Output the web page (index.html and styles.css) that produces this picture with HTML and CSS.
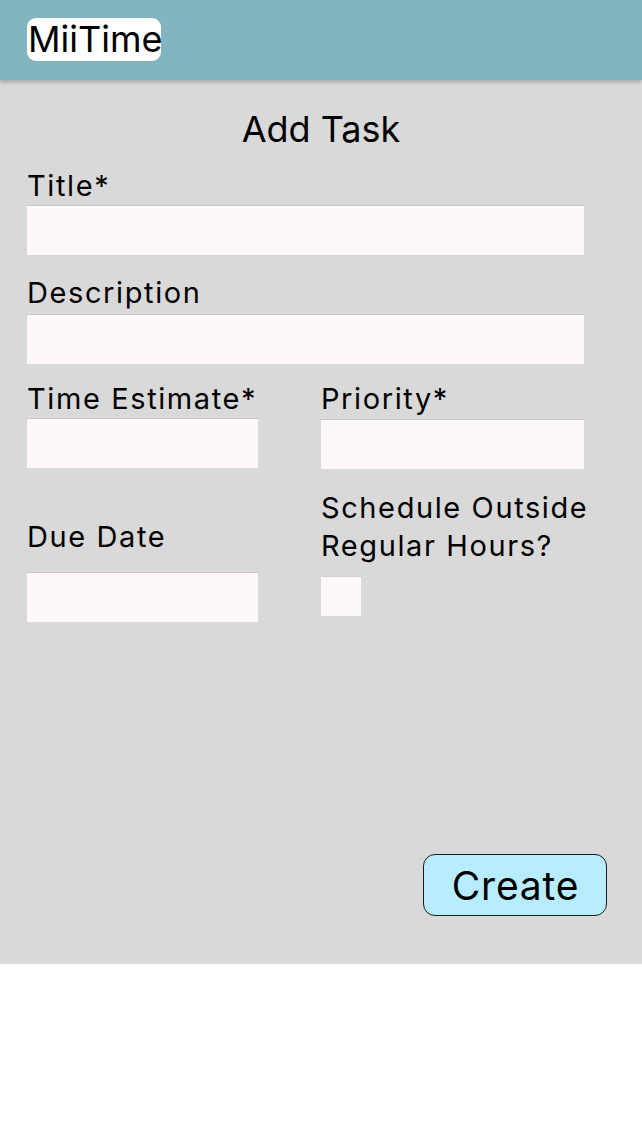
FILE: index.html
```html
<!DOCTYPE html>
<html>
<head>
<meta charset="utf-8">
<link rel="stylesheet" href="styles.css">
</head>
<body>
<header class="topbar">
  <div class="logo">MiiTime</div>
</header>
<main class="content">
  <h1 class="page-title">Add Task</h1>
  <form class="task-form">
    <div class="field title-field">
      <label class="label">Title*</label>
      <input class="input wide" type="text">
    </div>
    <div class="field desc-field">
      <label class="label label-desc">Description</label>
      <input class="input wide" type="text">
    </div>
    <div class="grid-row row-one">
      <div class="field">
        <label class="label">Time Estimate*</label>
        <input class="input small" type="text">
      </div>
      <div class="field priority">
        <label class="label">Priority*</label>
        <input class="input medium" type="text">
      </div>
    </div>
    <div class="grid-row row-two">
      <div class="field due">
        <label class="label">Due Date</label>
        <input class="input small" type="text">
      </div>
      <div class="field schedule">
        <label class="label two-line">Schedule Outside<br>Regular Hours?</label>
        <input class="check" type="checkbox">
      </div>
    </div>
    <div class="actions">
      <button class="create" type="button">Create</button>
    </div>
  </form>
</main>
</body>
</html>
```
FILE: styles.css
```css
* { box-sizing: border-box; }
html, body { margin: 0; padding: 0; background: #ffffff; }
body {
  font-family: Inter, "Noto Sans", sans-serif;
  color: #000;
  width: 642px;
}
.topbar {
  height: 80px;
  background: #83b5c0;
  padding: 18px 0 0 27px;
  box-shadow: 0 2px 4px rgba(0,0,0,0.25);
  position: relative;
  z-index: 1;
}
.logo {
  display: inline-block;
  background: #ffffff;
  border-radius: 9px;
  height: 43px;
  width: 134px;
  font-size: 36px;
  line-height: 43px;
  padding-left: 1px;
  white-space: nowrap;
}
.content {
  background: #d9d9d9;
  height: 884px;
  padding: 0 0 0 27px;
}
.page-title {
  margin: 0;
  padding-top: 27px;
  padding-right: 27px;
  font-size: 36px;
  font-weight: 400;
  line-height: 44px;
  text-align: center;
}
.task-form {
  display: flex;
  flex-direction: column;
  padding-top: 18px;
}
.field {
  display: flex;
  flex-direction: column;
  align-items: flex-start;
}
.label {
  font-size: 29px;
  line-height: 34px;
  letter-spacing: 1.6px;
  margin-bottom: 2px;
  white-space: nowrap;
}
.desc-field { margin-top: 21px; }
.label-desc { margin-bottom: 4px; }
.input {
  height: 50px;
  background: #fff8f8;
  border: none;
  border-top: 1px solid #cbc7c7;
  padding: 0 8px;
  font-family: inherit;
  font-size: 20px;
  outline: none;
}
.wide { width: 557px; }
.small { width: 231px; }
.medium { width: 263px; }
.grid-row {
  display: grid;
  grid-template-columns: 294px 263px;
  align-items: start;
}
.row-one { margin-top: 18px; }
.priority .label { margin-bottom: 3px; }
.row-two { margin-top: 20px; }
.due { padding-top: 31px; }
.due .label { margin-bottom: 18px; }
.two-line {
  line-height: 38px;
  margin-bottom: 11px;
}
.check {
  appearance: none;
  -webkit-appearance: none;
  margin: 0;
  width: 40px;
  height: 40px;
  background: #fff8f8;
  border: none;
  border-top: 1px solid #d2cccc;
}
.actions {
  display: flex;
  justify-content: flex-end;
  padding-right: 35px;
  margin-top: 232px;
}
.create {
  width: 184px;
  height: 62px;
  background: #b7edfe;
  border: 1px solid #1a1a1a;
  border-radius: 12px;
  font-family: inherit;
  font-size: 39px;
  letter-spacing: 0.8px;
  line-height: 1;
  color: #000;
  padding: 0 0 0 1px;
}
```
